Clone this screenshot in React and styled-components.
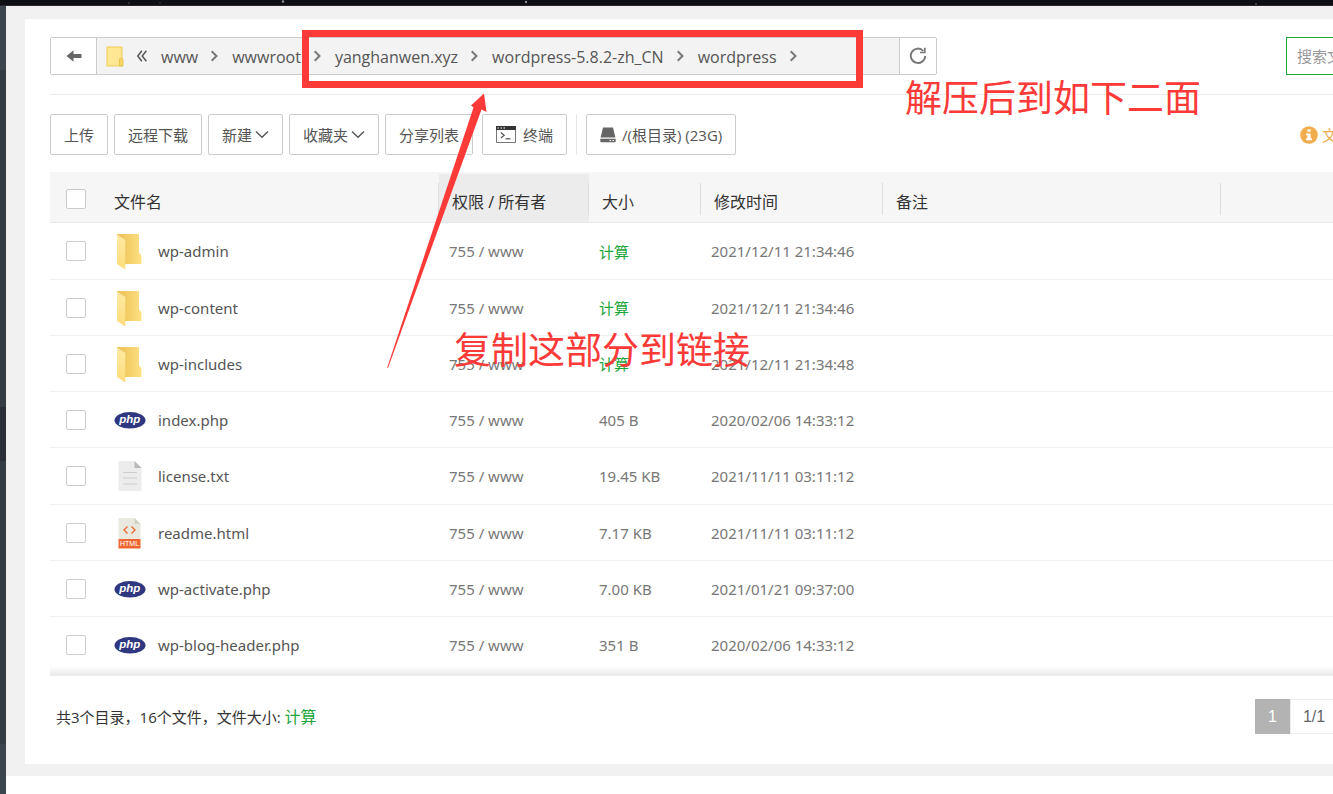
import React from 'react';
import styled, { createGlobalStyle, css } from 'styled-components';

const GlobalStyle = createGlobalStyle`
  * {
    box-sizing: border-box;
  }

  body {
    margin: 0;
    background: #ffffff;
    color: #555555;
    font-family: 'Open Sans', 'Noto Sans CJK SC', sans-serif;
    font-size: 15px;
  }

  button,
  input {
    font: inherit;
    color: inherit;
  }

  a {
    color: inherit;
    text-decoration: none;
  }
`;

const Page = styled.div`
  position: relative;
  min-height: 100vh;
  display: flex;
  flex-direction: column;
  overflow: hidden;
`;

const TopStrip = styled.header`
  height: 6px;
  background: #0e0f12;
  border-bottom: 1px solid #2b262c;

  svg {
    display: block;
  }
`;

const Body = styled.div`
  flex: 1;
  display: flex;
  min-width: 1500px;
`;

const Sidebar = styled.nav`
  display: flex;
  flex-direction: column;
  width: 6px;
  padding: 64px 0 50px;
  background: #3c444d;
`;

const MenuPart = styled.span`
  flex: ${(props) => (props.$active ? '0 0 54px' : props.$grow)};
  background: ${(props) => (props.$active ? '#2b2e37' : '#353d44')};
`;

const Main = styled.main`
  flex: 1;
  align-self: flex-start;
  background: #f1f1f1;
  padding: 13px 19px 12px;
`;

const Panel = styled.section`
  background: #ffffff;
  padding: 18px 25px 30px;
`;

const PathRow = styled.div`
  display: flex;
  justify-content: space-between;
  padding-bottom: 19px;
  border-bottom: 1px solid #ececec;
`;

const PathBar = styled.div`
  display: flex;
  width: 887px;
  height: 38px;
  border: 1px solid #cccccc;
  border-radius: 2px;
  background: #f3f3f3;
`;

const PathButton = styled.button`
  display: flex;
  align-items: center;
  justify-content: center;
  width: ${(props) => props.$width}px;
  padding: 0;
  border: 0;
  background: #ffffff;
  color: #666666;
  ${(props) =>
    props.$side === 'left'
      ? css`
          border-right: 1px solid #cccccc;
        `
      : css`
          border-left: 1px solid #cccccc;
        `}
`;

const Crumbs = styled.nav`
  flex: 1;
  display: flex;
  align-items: center;
  gap: 13px;
  padding-left: 9px;
  font-size: 16px;

  svg {
    flex: none;
  }

  a {
    padding-top: 2px;
  }
`;

const Search = styled.input`
  width: 170px;
  height: 38px;
  padding: 0 10px;
  border: 1px solid #20a53a;
  outline: 0;
  background: #ffffff;

  &::placeholder {
    color: #999999;
  }
`;

const Toolbar = styled.div`
  display: flex;
  align-items: center;
  gap: 9px;
  padding: 19px 0 17px;
`;

const ToolGroup = styled.div`
  display: flex;
  gap: 6px;
`;

const ToolButton = styled.button`
  display: flex;
  align-items: center;
  gap: ${(props) => props.$gap || 3}px;
  height: 41px;
  padding: 0 13px;
  border: 1px solid #cccccc;
  border-radius: 2px;
  background: #ffffff;
  white-space: nowrap;
`;

const Divider = styled.span`
  width: 1px;
  height: 41px;
  background: #e6e6e6;
`;

const Notice = styled.a`
  display: flex;
  align-items: center;
  gap: 4px;
  width: 156px;
  margin-left: auto;
  color: #f0ad4e;
`;

const FileTable = styled.table`
  width: 100%;
  table-layout: fixed;
  border-collapse: separate;
  border-spacing: 0;
  font-family: 'Noto Sans', 'Noto Sans CJK SC', sans-serif;
`;

const Col = styled.col`
  width: ${(props) => (props.$width ? `${props.$width}px` : 'auto')};
`;

const HeadCell = styled.th`
  height: 51px;
  padding: 2px 0 0 ${(props) => (props.$tick ? 16 : 13)}px;
  border-top: 2px solid #f6f6f6;
  border-bottom: 1px solid #e8e8e8;
  background: ${(props) => (props.$active ? '#ececec' : '#f6f6f6')};
  color: #333333;
  font-size: 16px;
  font-weight: 400;
  text-align: left;
`;

const HeadLabel = styled.span`
  display: flex;
  align-items: center;
  height: 32px;
  padding-top: 3px;
  border-right: 1px solid #dddddd;
`;

const Row = styled.tr`
  height: 56px;

  &:nth-child(4n + 1) {
    height: 57px;
  }
`;

const Cell = styled.td`
  padding: 0 0 0 ${(props) => (props.$tick ? 16 : 10)}px;
  border-bottom: 1px solid #f0f0f0;
  color: #777777;
`;

const Tick = styled.input`
  appearance: none;
  display: block;
  width: 20px;
  height: 20px;
  margin: 0;
  border: 1px solid #cccccc;
  border-radius: 2px;
  background: #ffffff;
`;

const FileName = styled.a`
  display: flex;
  align-items: center;
  gap: 12px;
  padding-left: 3px;
  color: #555555;

  svg {
    flex: none;
  }
`;

const GreenLink = styled.a`
  color: #20a53a;
  font-size: ${(props) => (props.$large ? 16 : 15)}px;
`;

const Footer = styled.footer`
  position: relative;
  display: flex;
  align-items: center;
  justify-content: space-between;
  padding: 23px 0 0 6px;
  border-top: 3px solid #ececec;
  color: #333333;

  /* fade over the last row */
  &::before {
    content: '';
    position: absolute;
    left: 0;
    right: 0;
    top: -10px;
    height: 7px;
    background: linear-gradient(rgba(240, 240, 240, 0), #f0f0f0);
  }
`;

const Summary = styled.span`
  padding-bottom: 2px;
`;

const Pager = styled.div`
  display: flex;
  width: 201px;
  font-family: 'Liberation Sans', sans-serif;
  font-size: 16px;
`;

const PageItem = styled.span`
  display: flex;
  align-items: center;
  justify-content: center;
  height: 35px;
  padding: 0 12px;
  border: 1px solid ${(props) => (props.$current ? '#b3b3b3' : '#ececec')};
  background: ${(props) => (props.$current ? '#b3b3b3' : '#ffffff')};
  color: ${(props) => (props.$current ? '#ffffff' : '#666666')};
`;

const MarkBox = styled.div`
  position: absolute;
  left: 302px;
  top: 30px;
  width: 561px;
  height: 58px;
  border: 7px solid #fc3a38;
  pointer-events: none;
`;

const MarkArrow = styled.svg`
  position: absolute;
  left: 386px;
  top: 93px;
  pointer-events: none;
`;

const MarkText = styled.p`
  position: absolute;
  left: ${(props) => props.$left}px;
  top: ${(props) => props.$top}px;
  margin: 0;
  color: #fc3a38;
  font-size: 37px;
  line-height: 50px;
  white-space: nowrap;
  pointer-events: none;
`;

const Chevron = () => (
  <svg width="8" height="12" viewBox="0 0 8 12" fill="none" stroke="#777777" strokeWidth="2">
    <path d="M0.7 1.2 5.5 6 0.7 10.8" />
  </svg>
);

const DownArrow = () => (
  <svg width="14" height="9" viewBox="0 0 14 9" fill="none" stroke="#555555" strokeWidth="1.4">
    <path d="M1 1.5 7 7.2 13 1.5" />
  </svg>
);

const BackIcon = () => (
  <svg width="16" height="12" viewBox="0 0 16 12" fill="#666666">
    <path d="M0.5 6 7.5 0.3V4H15.5V8H7.5V11.7Z" />
  </svg>
);

const RefreshIcon = () => (
  <svg width="18" height="18" viewBox="0 0 18 18" fill="none" stroke="#777777">
    <path d="M14.2 3.8A7.2 7.2 0 1 0 16.2 9" strokeWidth="1.9" />
    <path d="M15.8 0.8V5.5H11" strokeWidth="1.7" />
  </svg>
);

const PathFolder = () => (
  <svg width="18" height="21" viewBox="0 0 18 21">
    <path d="M1 1H16V20H1Z" fill="#ffe794" stroke="#f0cb55" />
    <path d="M13.5 20V13L15 11.5 17 13V20Z" fill="#f7d567" stroke="#e9bf45" strokeWidth="0.8" />
  </svg>
);

const DoubleLeft = () => (
  <svg width="11" height="12" viewBox="0 0 11 12" fill="none" stroke="#555555" strokeWidth="1.5">
    <path d="M4.8 0.8 0.8 6 4.8 11.2M9.4 0.8 5.2 6 9.4 11.2" />
  </svg>
);

const TerminalIcon = () => (
  <svg width="20" height="17" viewBox="0 0 20 17">
    <path d="M0.5 0.5H19.5V16.5H0.5Z" fill="#ffffff" stroke="#777777" />
    <path d="M0 0H20V4H0Z" fill="#333333" />
    <path d="M1.5 2H3M4.5 2H6M7.5 2H9" stroke="#ffffff" />
    <path d="M4.8 6.5 8.2 9.3 4.8 12" fill="none" stroke="#555555" strokeWidth="1.2" />
    <path d="M9.5 12.8H14.5" stroke="#555555" strokeWidth="1.2" />
  </svg>
);

const DiskIcon = () => (
  <svg width="16" height="16" viewBox="0 0 16 16" fill="#666666">
    <path d="M3 0.5H13L15.4 10.6H0.6Z" />
    <path d="M0.3 11.8H15.7V14.5L15 15.3H1L0.3 14.5Z" />
    <path d="M9.5 13.5H11M12.5 13.5H14" stroke="#ffffff" strokeWidth="1.2" />
  </svg>
);

const InfoIcon = () => (
  <svg width="18" height="18" viewBox="0 0 18 18">
    <circle cx="9" cy="9" r="8.8" fill="#f0ad4e" />
    <path d="M7.4 3.2H10.6V5.8H7.4ZM6 7.4H10.6V12.2H12V14.2H6V12.2H7.4V9.3H6Z" fill="#ffffff" />
  </svg>
);

const FolderIcon = () => (
  <svg width="32" height="38" viewBox="0 0 32 38">
    <defs>
      <linearGradient id="folder-back" x1="0" x2="1">
        <stop offset="0.2" stopColor="#edc55b" />
        <stop offset="1" stopColor="#ffe083" />
      </linearGradient>
      <linearGradient id="folder-front" x1="0" x2="0" y1="0" y2="1">
        <stop offset="0" stopColor="#ffeaa6" />
        <stop offset="1" stopColor="#fddb78" />
      </linearGradient>
    </defs>
    <path d="M3 2H25V20.5L27.5 23.5V32H10L3 27Z" fill="url(#folder-back)" />
    <path d="M3 2.5 11.3 8V37.5L3 32Z" fill="url(#folder-front)" />
  </svg>
);

const PhpIcon = () => (
  <svg width="32" height="18" viewBox="0 0 32 18">
    <ellipse cx="16" cy="9.3" rx="15.5" ry="8.3" fill="#2f3780" />
    <text
      x="15.7"
      y="12.4"
      fill="#ffffff"
      fontFamily="Liberation Sans, sans-serif"
      fontSize="11.5"
      fontStyle="italic"
      fontWeight="700"
      textAnchor="middle"
    >
      php
    </text>
  </svg>
);

const TextIcon = () => (
  <svg width="32" height="32" viewBox="0 0 32 32">
    <path d="M4.5 1H20.5L27.5 8V31H4.5Z" fill="#ececec" />
    <path d="M20.5 1 27.5 8H20.5Z" fill="#b8b8b8" />
    <path d="M9 12.5H23M9 18H23M9 24H23" stroke="#cccccc" />
  </svg>
);

const HtmlIcon = () => (
  <svg width="32" height="32" viewBox="0 0 32 32">
    <path d="M4.5 1H20.5L26.5 7V22H4.5Z" fill="#e9e9df" />
    <path d="M20.5 1 26.5 7H20.5Z" fill="#d2d2c4" />
    <path d="M13.5 9.5 10 13 13.5 16.5M17.5 9.5 21 13 17.5 16.5" fill="none" stroke="#ee6a36" strokeWidth="1.4" />
    <path d="M4.5 22H26.5V31.5H4.5Z" fill="#ee6631" />
    <text
      x="15.5"
      y="29.3"
      fill="#ffffff"
      fontFamily="Liberation Sans, sans-serif"
      fontSize="7"
      textAnchor="middle"
    >
      HTML
    </text>
  </svg>
);

const icons = {
  folder: FolderIcon,
  php: PhpIcon,
  txt: TextIcon,
  html: HtmlIcon,
};

const crumbs = ['www', 'wwwroot', 'yanghanwen.xyz', 'wordpress-5.8.2-zh_CN', 'wordpress'];

const columns = [
  { label: '文件名', width: 338 },
  { label: '权限 / 所有者', width: 150, active: true },
  { label: '大小', width: 112 },
  { label: '修改时间', width: 182 },
  { label: '备注', width: 338 },
];

const files = [
  { name: 'wp-admin', type: 'folder', time: '2021/12/11 21:34:46' },
  { name: 'wp-content', type: 'folder', time: '2021/12/11 21:34:46' },
  { name: 'wp-includes', type: 'folder', time: '2021/12/11 21:34:48' },
  { name: 'index.php', type: 'php', size: '405 B', time: '2020/02/06 14:33:12' },
  { name: 'license.txt', type: 'txt', size: '19.45 KB', time: '2021/11/11 03:11:12' },
  { name: 'readme.html', type: 'html', size: '7.17 KB', time: '2021/11/11 03:11:12' },
  { name: 'wp-activate.php', type: 'php', size: '7.00 KB', time: '2021/01/21 09:37:00' },
  { name: 'wp-blog-header.php', type: 'php', size: '351 B', time: '2020/02/06 14:33:12' },
];

function FileRow({ file }) {
  const Icon = icons[file.type];

  return (
    <Row>
      <Cell $tick>
        <Tick type="checkbox" aria-label={file.name} />
      </Cell>
      <Cell>
        <FileName href="#">
          <Icon />
          {file.name}
        </FileName>
      </Cell>
      <Cell>755 / www</Cell>
      <Cell>{file.size || <GreenLink href="#">计算</GreenLink>}</Cell>
      <Cell>{file.time}</Cell>
      <Cell />
      <Cell />
    </Row>
  );
}

export default function App() {
  return (
    <Page>
      <GlobalStyle />
      <TopStrip>
        <svg width="1333" height="5" fill="#8b8d95">
          <circle cx="283" cy="1.5" r="1.3" />
          <circle cx="129" cy="3" r="0.8" opacity="0.5" />
          <circle cx="160" cy="3" r="0.8" opacity="0.4" />
          <circle cx="526" cy="2" r="1.2" />
          <circle cx="1256" cy="4" r="1" opacity="0.5" />
        </svg>
      </TopStrip>
      <Body>
        <Sidebar>
          <MenuPart $grow={337} />
          <MenuPart $active />
          <MenuPart $grow={283} />
        </Sidebar>
        <Main>
          <Panel>
            <PathRow>
              <PathBar>
                <PathButton $side="left" $width={46} aria-label="后退">
                  <BackIcon />
                </PathButton>
                <Crumbs>
                  <PathFolder />
                  <DoubleLeft />
                  {crumbs.map((crumb) => (
                    <React.Fragment key={crumb}>
                      <a href="#">{crumb}</a>
                      <Chevron />
                    </React.Fragment>
                  ))}
                </Crumbs>
                <PathButton $side="right" $width={37} aria-label="刷新">
                  <RefreshIcon />
                </PathButton>
              </PathBar>
              <Search placeholder="搜索文件" aria-label="搜索文件" />
            </PathRow>
            <Toolbar>
              <ToolGroup>
                <ToolButton>上传</ToolButton>
                <ToolButton>远程下载</ToolButton>
                <ToolButton>
                  新建
                  <DownArrow />
                </ToolButton>
                <ToolButton>
                  收藏夹
                  <DownArrow />
                </ToolButton>
                <ToolButton>分享列表</ToolButton>
              </ToolGroup>
              <ToolButton $gap={7}>
                <TerminalIcon />
                终端
              </ToolButton>
              <Divider />
              <ToolButton $gap={6}>
                <DiskIcon />
                /(根目录) (23G)
              </ToolButton>
              <Notice href="#">
                <InfoIcon />
                文件
              </Notice>
            </Toolbar>
            <FileTable>
              <colgroup>
                <Col $width={51} />
                {columns.map((column) => (
                  <Col key={column.label} $width={column.width} />
                ))}
                <Col />
              </colgroup>
              <thead>
                <tr>
                  <HeadCell $tick>
                    <Tick type="checkbox" aria-label="全选" />
                  </HeadCell>
                  {columns.map((column) => (
                    <HeadCell key={column.label} $active={column.active}>
                      <HeadLabel>{column.label}</HeadLabel>
                    </HeadCell>
                  ))}
                  <HeadCell />
                </tr>
              </thead>
              <tbody>
                {files.map((file) => (
                  <FileRow key={file.name} file={file} />
                ))}
              </tbody>
            </FileTable>
            <Footer>
              <Summary>
                共3个目录，16个文件，文件大小:{' '}
                <GreenLink href="#" $large>
                  计算
                </GreenLink>
              </Summary>
              <Pager>
                <PageItem $current>1</PageItem>
                <PageItem>1/1</PageItem>
              </Pager>
            </Footer>
          </Panel>
        </Main>
      </Body>
      <MarkBox />
      <MarkArrow width="102" height="276" viewBox="0 0 102 276" fill="#fc3a38">
        <path d="M98 0.5 100.5 19 95.5 16.5 2 275 1.2 274.5 87.5 14.5 85 12.5Z" />
      </MarkArrow>
      <MarkText $left={905} $top={73}>
        解压后到如下二面
      </MarkText>
      <MarkText $left={454} $top={325}>
        复制这部分到链接
      </MarkText>
    </Page>
  );
}
